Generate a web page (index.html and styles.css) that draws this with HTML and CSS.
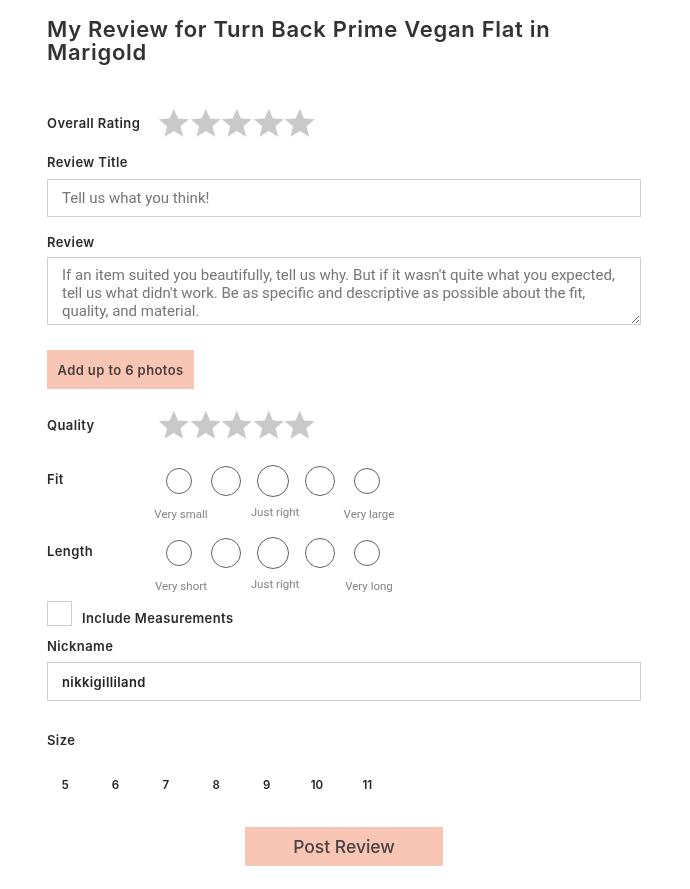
FILE: index.html
```html
<!DOCTYPE html>
<html lang="en">
<head>
    <meta charset="UTF-8">
    <meta name="viewport" content="width=device-width, initial-scale=1.0">
    <title>Write a Review</title>
    <link rel="stylesheet" href="styles.css">
</head>
<body>

<main class="review-form">
    <h1 class="title">My Review for Turn Back Prime Vegan Flat in Marigold</h1>

    <!-- Note globale -->
    <div class="rating-row overall">
        <span class="label">Overall Rating</span>
        <div class="stars">
            <svg viewBox="0 0 32 30"><polygon points="16,0.5 20.2,10.4 31.2,11.1 22.8,18.2 25.4,29 16,23.1 6.6,29 9.2,18.2 0.8,11.1 11.8,10.4"/></svg>
            <svg viewBox="0 0 32 30"><polygon points="16,0.5 20.2,10.4 31.2,11.1 22.8,18.2 25.4,29 16,23.1 6.6,29 9.2,18.2 0.8,11.1 11.8,10.4"/></svg>
            <svg viewBox="0 0 32 30"><polygon points="16,0.5 20.2,10.4 31.2,11.1 22.8,18.2 25.4,29 16,23.1 6.6,29 9.2,18.2 0.8,11.1 11.8,10.4"/></svg>
            <svg viewBox="0 0 32 30"><polygon points="16,0.5 20.2,10.4 31.2,11.1 22.8,18.2 25.4,29 16,23.1 6.6,29 9.2,18.2 0.8,11.1 11.8,10.4"/></svg>
            <svg viewBox="0 0 32 30"><polygon points="16,0.5 20.2,10.4 31.2,11.1 22.8,18.2 25.4,29 16,23.1 6.6,29 9.2,18.2 0.8,11.1 11.8,10.4"/></svg>
        </div>
    </div>

    <label class="field-label title-label" for="reviewTitle">Review Title</label>
    <input class="text-input" id="reviewTitle" type="text" placeholder="Tell us what you think!">

    <label class="field-label review-label" for="reviewText">Review</label>
    <textarea class="text-area" id="reviewText" placeholder="If an item suited you beautifully, tell us why. But if it wasn't quite what you expected,&#10;tell us what didn't work. Be as specific and descriptive as possible about the fit,&#10;quality, and material."></textarea>

    <button class="button photos-button" type="button">Add up to 6 photos</button>

    <div class="rating-row quality">
        <span class="label">Quality</span>
        <div class="stars">
            <svg viewBox="0 0 32 30"><polygon points="16,0.5 20.2,10.4 31.2,11.1 22.8,18.2 25.4,29 16,23.1 6.6,29 9.2,18.2 0.8,11.1 11.8,10.4"/></svg>
            <svg viewBox="0 0 32 30"><polygon points="16,0.5 20.2,10.4 31.2,11.1 22.8,18.2 25.4,29 16,23.1 6.6,29 9.2,18.2 0.8,11.1 11.8,10.4"/></svg>
            <svg viewBox="0 0 32 30"><polygon points="16,0.5 20.2,10.4 31.2,11.1 22.8,18.2 25.4,29 16,23.1 6.6,29 9.2,18.2 0.8,11.1 11.8,10.4"/></svg>
            <svg viewBox="0 0 32 30"><polygon points="16,0.5 20.2,10.4 31.2,11.1 22.8,18.2 25.4,29 16,23.1 6.6,29 9.2,18.2 0.8,11.1 11.8,10.4"/></svg>
            <svg viewBox="0 0 32 30"><polygon points="16,0.5 20.2,10.4 31.2,11.1 22.8,18.2 25.4,29 16,23.1 6.6,29 9.2,18.2 0.8,11.1 11.8,10.4"/></svg>
        </div>
    </div>

    <!-- Echelles taille / longueur -->
    <div class="scale-row fit">
        <span class="label">Fit</span>
        <div class="scale">
            <span class="dot small"></span>
            <span class="dot medium"></span>
            <span class="dot large"></span>
            <span class="dot medium"></span>
            <span class="dot small"></span>
            <span class="scale-text first">Very small</span>
            <span class="scale-text middle">Just right</span>
            <span class="scale-text last">Very large</span>
        </div>
    </div>

    <div class="scale-row length">
        <span class="label">Length</span>
        <div class="scale">
            <span class="dot small"></span>
            <span class="dot medium"></span>
            <span class="dot large"></span>
            <span class="dot medium"></span>
            <span class="dot small"></span>
            <span class="scale-text first">Very short</span>
            <span class="scale-text middle">Just right</span>
            <span class="scale-text last">Very long</span>
        </div>
    </div>

    <label class="checkbox-row">
        <span class="checkbox"></span>
        <span class="checkbox-text">Include Measurements</span>
    </label>

    <label class="field-label nickname-label" for="nickname">Nickname</label>
    <input class="text-input nickname" id="nickname" type="text" value="nikkigilliland">

    <div class="field-label size-label">Size</div>
    <div class="sizes">
        <span class="size">5</span>
        <span class="size">6</span>
        <span class="size">7</span>
        <span class="size">8</span>
        <span class="size">9</span>
        <span class="size">10</span>
        <span class="size">11</span>
    </div>

    <div class="submit">
        <button class="button post-button" type="button">Post Review</button>
    </div>
</main>

</body>
</html>
```

FILE: styles.css
```css
* {
    margin: 0;
    padding: 0;
    box-sizing: border-box;
}
body {
    font-family: 'Inter', 'Liberation Sans', sans-serif;
    background: #fff;
    color: #2e2e2e;
}
.review-form {
    width: 690px;
    padding: 18px 49px 0 47px;
}
.title {
    max-width: 530px;
    font-size: 22px;
    line-height: 23px;
    font-weight: 600;
    color: #333;
    letter-spacing: 0.7px;
}
.label, .field-label, .checkbox-text {
    font-size: 13px;
    line-height: 16px;
    font-weight: 600;
    letter-spacing: 0.4px;
    color: #2b2b2b;
    display: block;
}

/* Etoiles */
.rating-row {
    display: flex;
    align-items: center;
    height: 30px;
}
.rating-row .label {
    width: 111px;
}
.rating-row.overall {
    margin-top: 44px;
}
.rating-row.quality {
    margin-top: 21px;
}
.stars {
    display: flex;
}
.stars svg {
    width: 31.6px;
    height: 30px;
    fill: #c9c9c9;
}

/* Champs */
.title-label {
    margin-top: 16px;
    margin-bottom: 9px;
}
.review-label {
    margin-top: 17px;
    margin-bottom: 7px;
}
.text-input, .text-area {
    display: block;
    width: 100%;
    border: 1px solid #cfcfcf;
    font-family: 'Roboto', 'Liberation Sans', sans-serif;
    font-size: 15px;
    color: #333;
    outline: none;
}
.text-input {
    height: 38px;
    padding: 0 14px;
}
.text-area {
    height: 68px;
    padding: 8px 14px;
    line-height: 18px;
    resize: vertical;
}
.text-input::placeholder, .text-area::placeholder {
    color: #777;
}

.button {
    background-color: #f9c6b5;
    color: #473d3d;
    border: none;
    font-family: 'Inter', 'Liberation Sans', sans-serif;
    font-weight: 600;
    cursor: pointer;
}
.photos-button {
    display: block;
    margin-top: 25px;
    width: 147px;
    height: 39px;
    font-size: 13px;
    letter-spacing: 0.4px;
}

/* Echelles */
.scale-row {
    display: flex;
    align-items: flex-start;
}
.scale-row .label {
    width: 108px;
    padding-top: 6px;
}
.scale-row.fit {
    margin-top: 25px;
}
.scale-row.length {
    margin-top: 16px;
}
.scale {
    display: grid;
    grid-template-columns: repeat(5, 47px);
    grid-template-rows: 32px 14px;
    row-gap: 10px;
    align-items: center;
    justify-items: center;
}
.dot {
    border: 1.3px solid #616161;
    border-radius: 50%;
}
.dot.small {
    width: 26px;
    height: 26px;
}
.dot.medium {
    width: 30px;
    height: 30px;
}
.dot.large {
    width: 32px;
    height: 32px;
}
.scale-text {
    grid-row: 2;
    font-family: 'Roboto', 'Liberation Sans', sans-serif;
    font-size: 11.5px;
    line-height: 14px;
    color: #858585;
    white-space: nowrap;
    margin-left: 5px;
}
.scale-text.first {
    grid-column: 1;
}
.scale-text.middle {
    grid-column: 3;
    margin-top: -4px;
}
.scale-text.last {
    grid-column: 5;
}

.checkbox-row {
    display: flex;
    align-items: flex-end;
    gap: 10px;
    margin-top: 8px;
}
.checkbox {
    width: 25px;
    height: 25px;
    border: 1px solid #cfcfcf;
}

.nickname-label {
    margin-top: 12px;
    margin-bottom: 8px;
}
.text-input.nickname {
    height: 39px;
    font-family: 'Inter', 'Liberation Sans', sans-serif;
    font-weight: 600;
    font-size: 13px;
    letter-spacing: 0.4px;
    color: #222;
}
.size-label {
    margin-top: 31px;
}
.sizes {
    display: flex;
    gap: 14.4px;
    margin-top: 29px;
}
.size {
    width: 36px;
    text-align: center;
    font-size: 11.5px;
    line-height: 16px;
    font-weight: 600;
    color: #222;
}

.submit {
    display: flex;
    justify-content: center;
    margin-top: 34px;
}
.post-button {
    width: 198px;
    height: 39px;
    font-size: 17.5px;
    font-weight: 500;
    color: #4a4242;
}
```
